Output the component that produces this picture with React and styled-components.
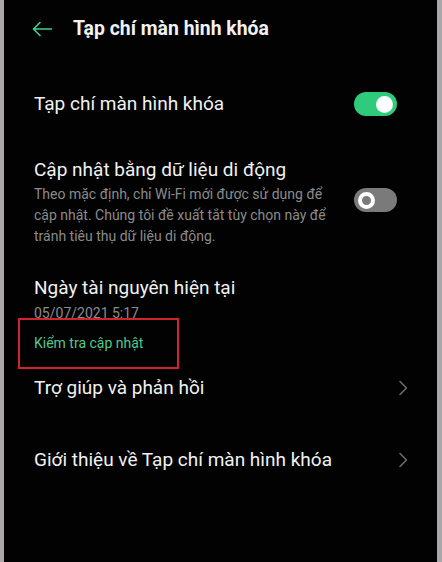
import React from 'react';
import styled, { createGlobalStyle } from 'styled-components';

const GlobalStyle = createGlobalStyle`
    html, body {
        margin: 0;
        padding: 0;
        background: #aaa6a9;
    }
    * {
        box-sizing: border-box;
    }
`;

const Frame = styled.div`
    width: 442px;
    height: 562px;
    padding: 0 5px 0 4px;
    background: #aaa6a9;
    display: flex;
`;

const Screen = styled.div`
    flex: 1;
    background: #020202;
    font-family: Roboto, 'Noto Sans', sans-serif;
    color: #f1f1f1;
    display: flex;
    flex-direction: column;
`;

const Header = styled.div`
    height: 58px;
    display: flex;
    align-items: center;
    padding-left: 27px;
    gap: 20px;
`;

const Title = styled.h1`
    margin: 0;
    font-size: 19.4px;
    font-weight: 700;
    line-height: 24px;
`;

const List = styled.div`
    display: flex;
    flex-direction: column;
    padding: 0 29px 0 30px;
`;

const Row = styled.div`
    display: flex;
    align-items: ${({ top }) => (top ? 'flex-start' : 'center')};
    justify-content: space-between;
    gap: 20px;
    margin-top: ${({ gap }) => gap}px;
    padding-right: ${({ inset }) => (inset ? 11 : 0)}px;
    position: relative;
`;

const TextBlock = styled.div`
    display: flex;
    flex-direction: column;
    flex: 1;
`;

const Label = styled.div`
    font-size: 19px;
    line-height: 24px;
`;

const Sub = styled.div`
    font-size: 14px;
    line-height: 21px;
    color: ${({ accent }) => (accent ? '#55c789' : '#8b8b8b')};
    margin-top: ${({ gap }) => gap || 0}px;
`;

const Toggle = styled.div`
    width: 43px;
    height: 24px;
    flex-shrink: 0;
    border-radius: 12px;
    background: ${({ on }) => (on ? '#2fcb7d' : '#7a7a7a')};
    display: flex;
    align-items: center;
    justify-content: ${({ on }) => (on ? 'flex-end' : 'flex-start')};
    padding: 0 4px;
    margin-top: ${({ offset }) => offset || 0}px;
`;

const Knob = styled.span`
    width: 17px;
    height: 17px;
    border-radius: 50%;
    background: ${({ on }) => (on ? '#ffffff' : '#7a7a7a')};
    border: ${({ on }) => (on ? 'none' : '4px solid #ffffff')};
`;

const Marker = styled.div`
    position: absolute;
    left: -16px;
    top: -15px;
    width: 161px;
    height: 51px;
    border: 2px solid #d0232a;
`;

const LinkLine = styled.div`
    position: relative;
    margin-top: 9px;
`;

const BackArrow = () => (
    <svg width="22" height="16" viewBox="0 0 22 16" fill="none">
        <path d="M20.5 8H2.5M9 1.5L2.5 8L9 14.5" stroke="#43d18f" strokeWidth="1.6" strokeLinecap="round" strokeLinejoin="round" />
    </svg>
);

const Chevron = () => (
    <svg width="10" height="16" viewBox="0 0 10 16" fill="none">
        <path d="M2 1.5L8.5 8L2 14.5" stroke="#6b6b6b" strokeWidth="1.6" strokeLinecap="round" strokeLinejoin="round" />
    </svg>
);

const App = () => (
    <>
        <GlobalStyle />
        <Frame>
            <Screen>
                <Header>
                    <BackArrow />
                    <Title>Tạp chí màn hình khóa</Title>
                </Header>
                <List>
                    <Row gap={34} inset>
                        <Label>Tạp chí màn hình khóa</Label>
                        <Toggle on>
                            <Knob on />
                        </Toggle>
                    </Row>
                    <Row gap={42} top inset>
                        <TextBlock>
                            <Label>Cập nhật bằng dữ liệu di động</Label>
                            <Sub gap={2}>
                                Theo mặc định, chỉ Wi-Fi mới được sử dụng để cập nhật. Chúng tôi đề xuất tắt tùy chọn này để tránh tiêu thụ dữ liệu di động.
                            </Sub>
                        </TextBlock>
                        <Toggle offset={30}>
                            <Knob />
                        </Toggle>
                    </Row>
                    <Row gap={29} top>
                        <TextBlock>
                            <Label>Ngày tài nguyên hiện tại</Label>
                            <Sub gap={3}>05/07/2021 5:17</Sub>
                            <LinkLine>
                                <Sub accent>Kiểm tra cập nhật</Sub>
                                <Marker />
                            </LinkLine>
                        </TextBlock>
                    </Row>
                    <Row gap={22}>
                        <Label>Trợ giúp và phản hồi</Label>
                        <Chevron />
                    </Row>
                    <Row gap={48}>
                        <Label>Giới thiệu về Tạp chí màn hình khóa</Label>
                        <Chevron />
                    </Row>
                </List>
            </Screen>
        </Frame>
    </>
);

export default App;
